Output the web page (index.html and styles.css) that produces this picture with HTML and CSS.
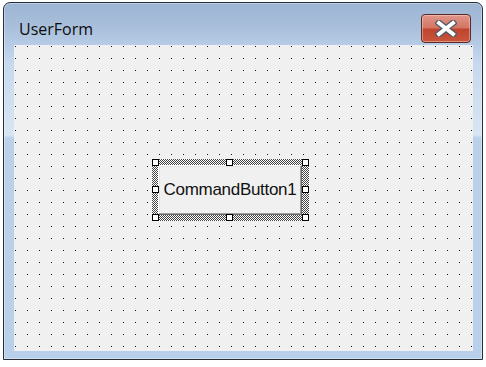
FILE: index.html
```html
<!DOCTYPE html>
<html lang="en">
<head>
  <meta charset="UTF-8">
  <title>UserForm</title>
  <link rel="stylesheet" href="styles.css">
</head>
<body>

<div class="window">
  <div class="titlebar">
    <span class="title">UserForm</span>
    <div class="close-btn">
      <svg width="22" height="17" viewBox="0 0 22 17">
        <path d="M4 3 L18 14 M18 3 L4 14" stroke="#4e5866" stroke-width="6.5" stroke-linecap="square" fill="none"/>
        <path d="M4 3 L18 14 M18 3 L4 14" stroke="#fff" stroke-width="4" stroke-linecap="square" fill="none"/>
      </svg>
    </div>
  </div>

  <div class="client">
    <!-- selected control in the designer -->
    <div class="selection">
      <button class="cmd" type="button">CommandButton1</button>
      <span class="handle h-tl"></span>
      <span class="handle h-tm"></span>
      <span class="handle h-tr"></span>
      <span class="handle h-ml"></span>
      <span class="handle h-mr"></span>
      <span class="handle h-bl"></span>
      <span class="handle h-bm"></span>
      <span class="handle h-br"></span>
    </div>
  </div>
</div>

</body>
</html>
```

FILE: styles.css
```css
html, body {
  margin: 0;
  padding: 0;
  background-color: #fff;
}

.window {
  margin: 2px 0 0 3px;
  width: 478px;
  height: 356px;
  border: 1px solid #2a2d33;
  border-radius: 7px 7px 0 0;
  box-shadow: inset 0 0 0 1px rgba(255,255,255,0.35);
  background: linear-gradient(to bottom,
    #9db6d4 0,
    #a9bfdb 25px,
    #b6cce6 42px,
    #c6d9ee 60px,
    #d8e5f3 132px,
    #bbd1ea 135px,
    #b9d0ea 100%);
}

.titlebar {
  height: 42px;
  display: flex;
  align-items: center;
}

.title {
  margin-left: 15px;
  margin-top: 9px;
  font-family: "Open Sans", "Noto Sans", sans-serif;
  font-size: 16px;
  color: #0c0c0c;
}

.close-btn {
  margin-left: auto;
  margin-right: 11px;
  align-self: flex-start;
  margin-top: 11px;
  width: 48px;
  height: 27px;
  border: 1px solid #5a2a28;
  border-radius: 4px;
  box-shadow: inset 0 0 0 1px rgba(255,220,210,0.45);
  background: linear-gradient(to bottom, #e0978a 0, #d47463 48%, #c0442d 52%, #c8553c 100%);
  display: flex;
  align-items: center;
  justify-content: center;
}

.client {
  position: relative;
  margin: 0 9px 0 10px;
  height: 306px;
  background-color: #f0f0f0;
  background-image: conic-gradient(from 270deg at 1px 1px, #111 90deg, transparent 0);
  background-size: 12px 12px;
  background-position: 1px 1px;
}

.selection {
  position: absolute;
  left: 138px;
  top: 114px;
  width: 157px;
  height: 62px;
  background: repeating-conic-gradient(#444 0 25%, #fff 0 50%) 0 0 / 2px 2px;
}

.cmd {
  position: absolute;
  left: 6px;
  top: 6px;
  width: 144px;
  height: 50px;
  margin: 0;
  padding: 0;
  border: 1px solid;
  border-color: #fff #696969 #696969 #fff;
  box-shadow: inset -1px -1px 0 #a0a0a0, inset 1px 1px 0 #e3e3e3;
  background: #f0f0f0;
  font-family: "Liberation Sans", Arial, sans-serif;
  font-size: 17px;
  letter-spacing: -0.3px;
  color: #111;
}

.handle {
  position: absolute;
  width: 5px;
  height: 5px;
  border: 1px solid #000;
  background: #fff;
}

.h-tl { left: 0; top: 0; }
.h-tm { left: 74px; top: 0; }
.h-tr { left: 150px; top: 0; }
.h-ml { left: 0; top: 27px; }
.h-mr { left: 150px; top: 27px; }
.h-bl { left: 0; top: 55px; }
.h-bm { left: 74px; top: 55px; }
.h-br { left: 150px; top: 55px; }
```
